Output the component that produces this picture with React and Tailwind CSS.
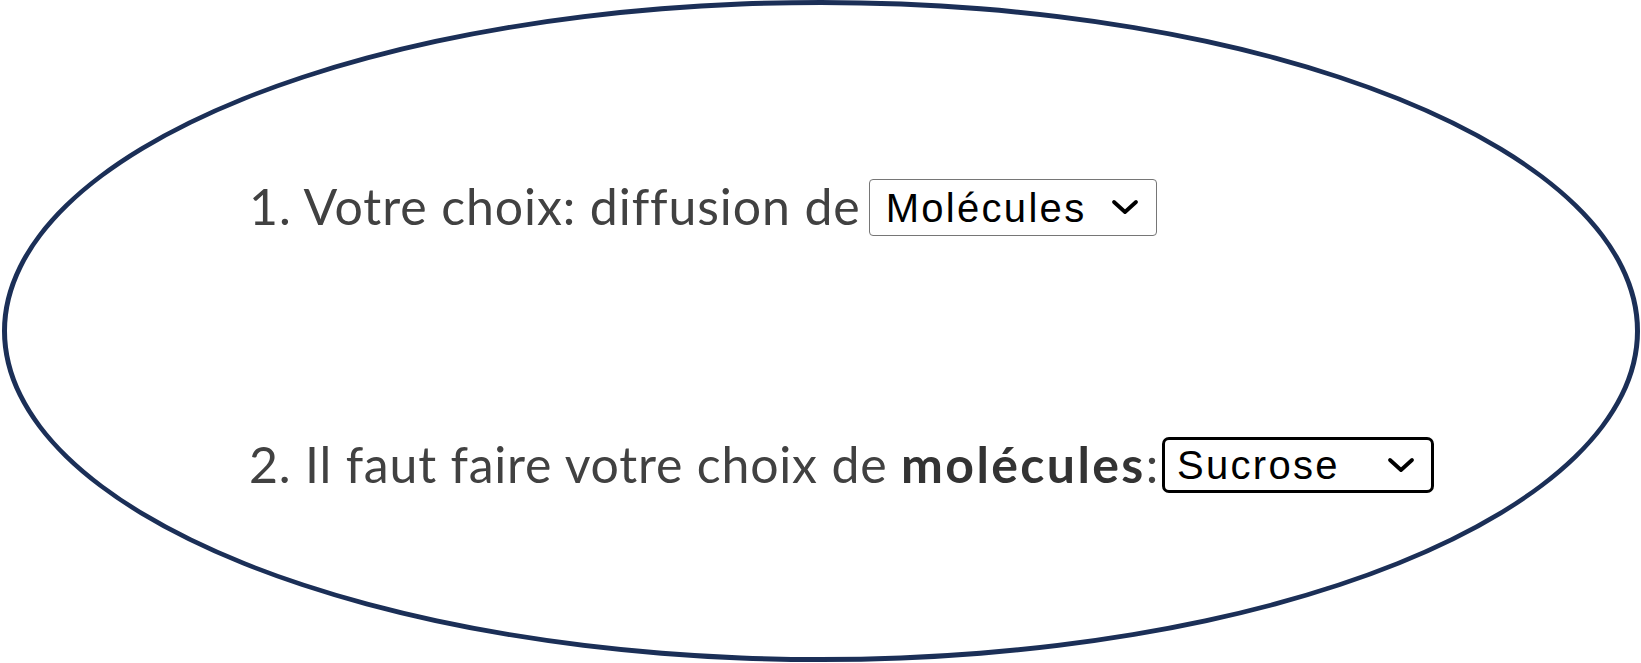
import { useState } from "react";

function Chevron({ className }) {
  return (
    <svg
      viewBox="0 0 30 16"
      className={className}
      fill="none"
      stroke="currentColor"
      strokeWidth="3.8"
      strokeLinecap="round"
      strokeLinejoin="round"
    >
      <path d="M4 3 L15 13 L26 3" />
    </svg>
  );
}

export default function App() {
  const [particle, setParticle] = useState("molecules");
  const [molecule, setMolecule] = useState("sucrose");

  return (
    <div className="h-[663px] w-[1641px] overflow-hidden bg-white pl-[2px]">
      <div className="box-border h-[662px] w-[1638px] rounded-[50%] border-[5px] border-[#1b2f57] pl-[242px] pt-[171px] font-['Lato',sans-serif] text-[50px] text-[#414141]">
        <div className="flex items-start">
          <span className="leading-[60px] tracking-[0.9px] whitespace-pre">1. Votre choix: diffusion de</span>
          <div className="relative mt-[3px] ml-[8px] inline-flex">
            <select
              value={particle}
              onChange={(e) => setParticle(e.target.value)}
              className="h-[57px] w-[288px] appearance-none rounded-[4px] border border-[#767676] bg-white pl-[16px] font-['Liberation_Sans',Arial,sans-serif] text-[40px] leading-[44px] tracking-[2.3px] text-black outline-none"
            >
              <option value="molecules">Molécules</option>
              <option value="ions">Ions</option>
            </select>
            <Chevron className="pointer-events-none absolute right-[17px] top-[20px] h-[16px] w-[30px] text-black" />
          </div>
        </div>

        <div className="mt-[198px] flex items-start">
          <span className="leading-[60px] tracking-[0.8px] whitespace-pre">
            2. Il faut faire votre choix de <b className="font-bold tracking-[2.4px] text-[#333]">molécules</b>:
          </span>
          <div className="relative mt-[3px] ml-[3px] inline-flex">
            <select
              value={molecule}
              onChange={(e) => setMolecule(e.target.value)}
              className="h-[56px] w-[272px] appearance-none rounded-[7px] border-[3px] border-black bg-white pl-[12px] font-['Liberation_Sans',Arial,sans-serif] text-[40px] leading-[44px] tracking-[2.3px] text-black outline-none"
            >
              <option value="sucrose">Sucrose</option>
              <option value="glucose">Glucose</option>
              <option value="amidon">Amidon</option>
            </select>
            <Chevron className="pointer-events-none absolute right-[18px] top-[20px] h-[16px] w-[30px] text-black" />
          </div>
        </div>
      </div>
    </div>
  );
}
